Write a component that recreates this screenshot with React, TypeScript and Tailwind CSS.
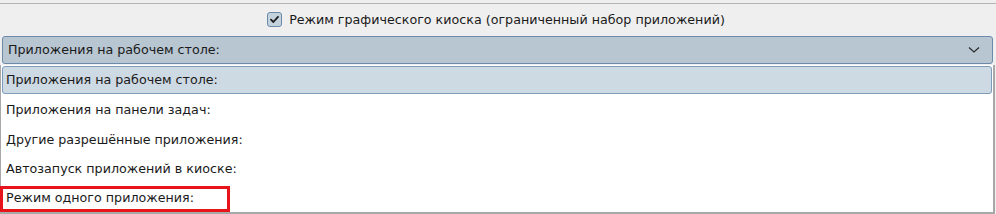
import React from "react";

const items = [
  "Приложения на рабочем столе:",
  "Приложения на панели задач:",
  "Другие разрешённые приложения:",
  "Автозапуск приложений в киоске:",
  "Режим одного приложения:",
];

const heights = ["h-[30px]", "h-[30px]", "h-[29px]", "h-[29px]", "h-[29px]"];

export default function App() {
  return (
    <div
      className="relative w-[996px] h-[214px] bg-[#efefef] overflow-hidden text-[12.7px] text-[#1a1a1a]"
      style={{ fontFamily: '"DejaVu Sans", "Noto Sans", sans-serif' }}
    >
      <div className="h-[3px]" />
      <div className="border-t border-[#b4b4b4] h-[33px] flex items-center justify-center gap-[7px] pb-[1px] pr-[4px]">
        <div className="w-[15px] h-[15px] rounded-[3px] border border-[#6b8aa8] bg-[#c4d2de] flex items-center justify-center">
          <svg width="11" height="11" viewBox="0 0 11 11">
            <path d="M2 5.6 L4.4 8 L9 2.8" fill="none" stroke="#1e1e1e" strokeWidth="1.8" strokeLinecap="round" strokeLinejoin="round" />
          </svg>
        </div>
        <span>Режим графического киоска (ограниченный набор приложений)</span>
      </div>
      <div className="mx-[2px] mr-[3px] h-[28px] rounded-[3px] border border-[#6c8bab] bg-[#b8c6d2] flex items-center justify-between pl-[5px] pr-[12px]">
        <span>Приложения на рабочем столе:</span>
        <svg width="12" height="8" viewBox="0 0 12 8">
          <path d="M1 1.5 L6 6 L11 1.5" fill="none" stroke="#2a2a2a" strokeWidth="1.2" />
        </svg>
      </div>
      <div className="mt-[1px] w-[995px] bg-white border-l border-r-2 border-b-2 border-[#a8a8a8] flex flex-col">
        {items.map((t, i) => (
          <div key={i} className={`${heights[i]} flex items-center`}>
            {i === 0 ? (
              <div className="mx-[1px] h-[28px] w-full rounded-[3px] border border-[#7d9cb9] bg-[#cdd9e3] flex items-center pl-[3px]">
                {t}
              </div>
            ) : (
              <span className="pl-[5px]">{t}</span>
            )}
          </div>
        ))}
      </div>
      <div className="absolute left-0 top-[186px] w-[230px] h-[26px] border-[3px] border-[#e8141c] pointer-events-none" />
    </div>
  );
}
